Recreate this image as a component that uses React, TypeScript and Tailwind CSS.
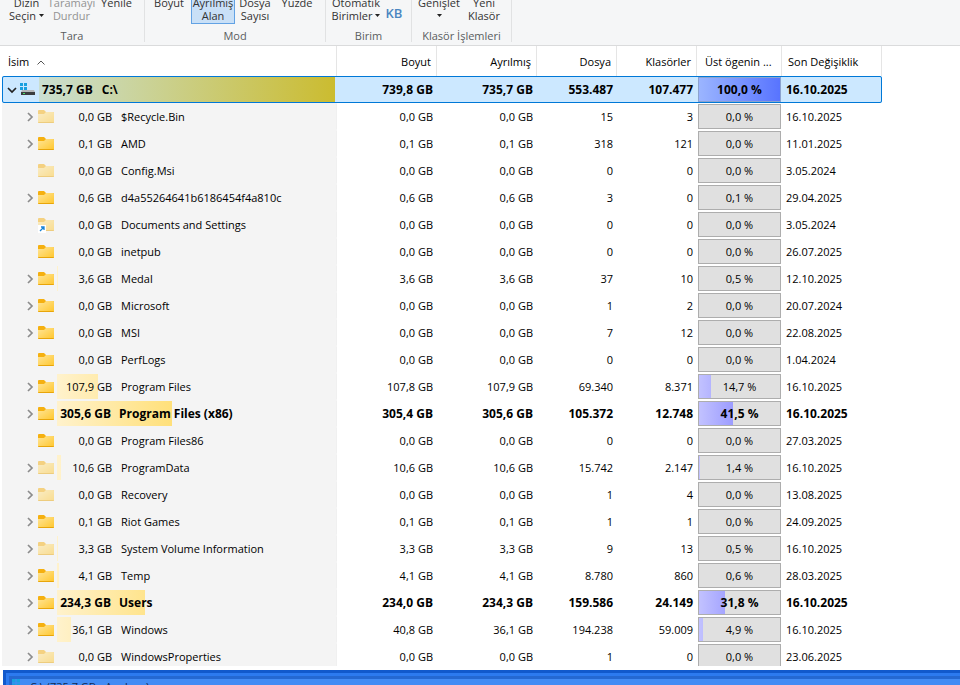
import { useState } from "react";
import type { ReactNode } from "react";
import clsx from "clsx";

type Entry = {
  name: string;
  size: string;
  total: string;
  files: string;
  folders: string;
  percent: string;
  date: string;
  leaf?: boolean;
  hidden?: boolean;
  link?: boolean;
  bold?: boolean;
};

const entries: Entry[] = [
  { name: "$Recycle.Bin", size: "0,0", total: "0,0", files: "15", folders: "3", percent: "0,0", date: "16.10.2025", hidden: true },
  { name: "AMD", size: "0,1", total: "0,1", files: "318", folders: "121", percent: "0,0", date: "11.01.2025" },
  { name: "Config.Msi", size: "0,0", total: "0,0", files: "0", folders: "0", percent: "0,0", date: "3.05.2024", leaf: true, hidden: true },
  { name: "d4a55264641b6186454f4a810c", size: "0,6", total: "0,6", files: "3", folders: "0", percent: "0,1", date: "29.04.2025" },
  { name: "Documents and Settings", size: "0,0", total: "0,0", files: "0", folders: "0", percent: "0,0", date: "3.05.2024", leaf: true, hidden: true, link: true },
  { name: "inetpub", size: "0,0", total: "0,0", files: "0", folders: "0", percent: "0,0", date: "26.07.2025", leaf: true },
  { name: "Medal", size: "3,6", total: "3,6", files: "37", folders: "10", percent: "0,5", date: "12.10.2025" },
  { name: "Microsoft", size: "0,0", total: "0,0", files: "1", folders: "2", percent: "0,0", date: "20.07.2024" },
  { name: "MSI", size: "0,0", total: "0,0", files: "7", folders: "12", percent: "0,0", date: "22.08.2025" },
  { name: "PerfLogs", size: "0,0", total: "0,0", files: "0", folders: "0", percent: "0,0", date: "1.04.2024", leaf: true },
  { name: "Program Files", size: "107,9", total: "107,8", files: "69.340", folders: "8.371", percent: "14,7", date: "16.10.2025" },
  { name: "Program Files (x86)", size: "305,6", total: "305,4", files: "105.372", folders: "12.748", percent: "41,5", date: "16.10.2025", bold: true },
  { name: "Program Files86", size: "0,0", total: "0,0", files: "0", folders: "0", percent: "0,0", date: "27.03.2025", leaf: true },
  { name: "ProgramData", size: "10,6", total: "10,6", files: "15.742", folders: "2.147", percent: "1,4", date: "16.10.2025", hidden: true },
  { name: "Recovery", size: "0,0", total: "0,0", files: "1", folders: "4", percent: "0,0", date: "13.08.2025", hidden: true },
  { name: "Riot Games", size: "0,1", total: "0,1", files: "1", folders: "1", percent: "0,0", date: "24.09.2025" },
  { name: "System Volume Information", size: "3,3", total: "3,3", files: "9", folders: "13", percent: "0,5", date: "16.10.2025", hidden: true },
  { name: "Temp", size: "4,1", total: "4,1", files: "8.780", folders: "860", percent: "0,6", date: "28.03.2025" },
  { name: "Users", size: "234,3", total: "234,0", files: "159.586", folders: "24.149", percent: "31,8", date: "16.10.2025", bold: true },
  { name: "Windows", size: "36,1", total: "40,8", files: "194.238", folders: "59.009", percent: "4,9", date: "16.10.2025" },
  { name: "WindowsProperties", size: "0,0", total: "0,0", files: "1", folders: "0", percent: "0,0", date: "23.06.2025", hidden: true },
];

const toWidth = (percent: string) => `${percent.replace(",", ".")}%`;

function FolderIcon({ faded, link }: { faded?: boolean; link?: boolean }) {
  return (
    <span className="relative block h-[13px] w-4 shrink-0">
      <svg viewBox="0 0 16 13" className={clsx("h-[13px] w-4", faded && "opacity-50")}>
        <defs>
          <linearGradient id="folder" x1="0" y1="0" x2="1" y2="1">
            <stop offset="0" stopColor="#ffe597" />
            <stop offset="1" stopColor="#ffc62c" />
          </linearGradient>
        </defs>
        <path d="M0 1Q0 0 1 0H6L8 2H15Q16 2 16 3V6H0Z" fill="#f5b010" />
        <path d="M0 4H6L8 2H15Q16 2 16 3V12Q16 13 15 13H1Q0 13 0 12Z" fill="url(#folder)" />
        <path d="M0 12H16Q16 13 15 13H1Q0 13 0 12Z" fill="#e8a50a" />
      </svg>
      {link && (
        <svg viewBox="0 0 8 8" className="absolute top-[7px] left-0 h-2 w-2">
          <path d="M0 0H8V8H0Z" fill="#fff" />
          <path d="M2 6L5.500 2.500M3 2H6V5" stroke="#1683d8" strokeWidth="1.300" fill="none" />
        </svg>
      )}
    </span>
  );
}

function WindowsMark({ className }: { className?: string }) {
  return (
    <svg viewBox="0 0 7 7" className={className} fill="#18a0e0">
      <path d="M0 0H3V3H0ZM4 0H7V3H4ZM0 4H3V7H0ZM4 4H7V7H4Z" />
    </svg>
  );
}

function DriveIcon() {
  return (
    <svg viewBox="0 0 16 13" className="h-[13px] w-4 shrink-0">
      <path d="M0 0H3V3H0ZM4 0H7V3H4ZM0 4H3V7H0ZM4 4H7V7H4Z" fill="#18a0e0" />
      <path d="M2 7H14L15 9H1Z" fill="#b4b7ba" />
      <path d="M1 9H15V12H1Z" fill="#3b3d40" />
      <path d="M3 10H5V11H3Z" fill="#4be36a" />
    </svg>
  );
}

function Chevron({ open }: { open?: boolean }) {
  return (
    <svg viewBox="0 0 10 10" className="h-2.5 w-2.5" fill="none" strokeWidth="1.700">
      {open ? (
        <path d="M1 3L5 7L9 3" stroke="#222" />
      ) : (
        <path d="M3 1L7 5L3 9" stroke="#8c8c8c" />
      )}
    </svg>
  );
}

function RibbonGroup({ label, className, children }: { label: string; className?: string; children: ReactNode }) {
  return (
    <div className="flex h-[42px] flex-col border-r border-[#e1e2e3]">
      <div className={clsx("flex h-6 shrink-0 items-end overflow-hidden", className)}>{children}</div>
      <p className="pt-1 text-center leading-4 text-[#5a5d60]">{label}</p>
    </div>
  );
}

function RibbonButton({
  lines,
  className,
  caret,
  active,
  disabled,
}: {
  lines: string[];
  className: string;
  caret?: boolean;
  active?: boolean;
  disabled?: boolean;
}) {
  return (
    <button
      type="button"
      disabled={disabled}
      className={clsx(
        "flex h-8 shrink-0 flex-col items-center border pt-[3px] leading-[13px] whitespace-nowrap",
        active ? "border-[#62a2e4] bg-[#c9e0f7]" : "border-transparent",
        disabled ? "text-[#939393]" : "text-[#333]",
        className,
      )}
    >
      {lines.map((line, i) => (
        <span key={i} className="flex h-[13px] items-center gap-[3px]">
          {line}
          {caret && i === lines.length - 1 && (
            <svg viewBox="0 0 5 3" className="h-[3px] w-[5px]">
              <path d="M0 0H5L2.500 3Z" fill="#222" />
            </svg>
          )}
        </span>
      ))}
    </button>
  );
}

function Ribbon() {
  return (
    <header className="flex h-[46px] shrink-0 overflow-hidden border-b border-[#dadbdc] bg-[#f5f6f7]">
      <RibbonGroup label="Tara" className="pr-[5px] pl-1">
        <RibbonButton lines={["Dizin", "Seçin"]} className="w-[45px]" caret />
        <RibbonButton lines={["Taramayı", "Durdur"]} className="w-[45px]" disabled />
        <RibbonButton lines={["Yenile"]} className="w-[45px]" />
      </RibbonGroup>
      <RibbonGroup label="Mod" className="pr-1.5 pl-0.5">
        <RibbonButton lines={["Boyut"]} className="w-11" />
        <RibbonButton lines={["Ayrılmış", "Alan"]} className="w-11" active />
        <RibbonButton lines={["Dosya", "Sayısı"]} className="w-10" />
        <RibbonButton lines={["Yüzde"]} className="w-11" />
      </RibbonGroup>
      <RibbonGroup label="Birim" className="pr-[5px] pl-1">
        <RibbonButton lines={["Otomatik", "Birimler"]} className="w-[52px]" caret />
        <button type="button" className="w-6 pb-[3px] text-[13px] leading-4 font-semibold text-[#4a86c0]">
          KB
        </button>
      </RibbonGroup>
      <RibbonGroup label="Klasör İşlemleri" className="pr-[5px] pl-1">
        <RibbonButton lines={["Genişlet", ""]} className="w-[46px]" caret />
        <RibbonButton lines={["Yeni", "Klasör"]} className="w-11" />
      </RibbonGroup>
    </header>
  );
}

function PercentCell({ percent, root }: { percent: string; root?: boolean }) {
  return (
    <td className="p-0 px-px">
      <div
        className={clsx(
          "relative h-[25px] border text-center leading-[23px]",
          root ? "border-[#8ba3cf] bg-[#cce8ff]" : "border-[#adadad] bg-[#e0e0e0]",
        )}
      >
        <div
          className={clsx(
            "absolute inset-y-0 left-0",
            root
              ? "bg-[linear-gradient(to_right,#9bb5ff,#5874ff)]"
              : "bg-[linear-gradient(to_right,#c2c2ff,#9c9cff_34px)]",
          )}
          style={{ width: toWidth(percent) }}
        />
        <span className="relative">{percent} %</span>
      </div>
    </td>
  );
}

function EntryRow({ entry }: { entry: Entry }) {
  return (
    <tr className={clsx("h-[27px]", entry.bold && "text-[12px] font-bold")}>
      <td className="bg-[#f4f4f4] p-0">
        <div className="flex h-[25px] items-center border-r border-[#f0f0f0] pl-[23px]">
          <span className="flex w-[13px] shrink-0">
            {!entry.leaf && (
              <button type="button" aria-label={entry.name}>
                <Chevron />
              </button>
            )}
          </span>
          <FolderIcon faded={entry.hidden} link={entry.link} />
          <div
            className={clsx(
              "relative mr-px ml-[3px] flex h-[25px] flex-1 items-center",
              entry.bold ? "gap-2" : "gap-[9px]",
            )}
          >
            <div
              className="absolute inset-y-0 left-0 bg-[linear-gradient(to_right,#fff2cc,#ffe07a_115px)]"
              style={{ width: toWidth(entry.percent) }}
            />
            <span className={clsx("relative text-right whitespace-nowrap", entry.bold ? "w-[54px]" : "w-[55px]")}>
              {entry.size} GB
            </span>
            <span className="relative whitespace-nowrap">{entry.name}</span>
          </div>
        </div>
      </td>
      <td className="p-0 pr-1 text-right">{entry.total} GB</td>
      <td className="p-0 pr-1 text-right">{entry.size} GB</td>
      <td className="p-0 pr-1 text-right">{entry.files}</td>
      <td className="p-0 pr-1 text-right">{entry.folders}</td>
      <PercentCell percent={entry.percent} />
      <td className="p-0 pl-1">{entry.date}</td>
    </tr>
  );
}

export default function App() {
  const [open, setOpen] = useState(true);

  return (
    <div className="flex h-screen flex-col overflow-hidden bg-white font-['Open_Sans','Noto_Sans',sans-serif] text-[11px] text-black">
      <Ribbon />

      <main className="min-h-0 flex-1 overflow-hidden pl-0.5">
        <table className="w-[880px] table-fixed border-separate border-spacing-0 leading-4">
          <colgroup>
            <col className="w-[335px]" />
            <col className="w-[100px]" />
            <col className="w-[100px]" />
            <col className="w-20" />
            <col className="w-20" />
            <col className="w-[85px]" />
            <col className="w-[100px]" />
          </colgroup>
          <thead>
            <tr className="h-[30px] whitespace-nowrap *:border-r *:border-[#e5e5e5] *:p-0 *:pt-0.5 *:font-normal">
              <th className="text-left">
                <button type="button" className="flex items-center gap-2 pl-1.5">
                  İsim
                  <svg viewBox="0 0 8 5" className="h-[5px] w-2" fill="none">
                    <path d="M.5 4.500L4 1L7.500 4.500" stroke="#555" />
                  </svg>
                </button>
              </th>
              <th className="text-right">
                <span className="pr-[5px]">Boyut</span>
              </th>
              <th className="text-right">
                <span className="pr-[5px]">Ayrılmış</span>
              </th>
              <th className="text-right">
                <span className="pr-[5px]">Dosya</span>
              </th>
              <th className="text-right">
                <span className="pr-[5px]">Klasörler</span>
              </th>
              <th className="text-left">
                <span className="pl-2">Üst ögenin ...</span>
              </th>
              <th className="text-left">
                <span className="pl-1.5">Son Değişiklik</span>
              </th>
            </tr>
          </thead>
          <tbody>
            <tr className="h-[27px] rounded-xs bg-[#cce8ff] text-[12px] font-bold outline-1 -outline-offset-1 outline-[#0078d7]">
              <td className="p-0">
                <div className="flex h-[25px] items-center pl-[5px]">
                  <button type="button" aria-label="C:\" className="mr-[3px]" onClick={() => setOpen(!open)}>
                    <Chevron open={open} />
                  </button>
                  <DriveIcon />
                  <div className="mr-0.5 ml-[3px] flex h-[25px] flex-1 items-center gap-[9px] bg-[linear-gradient(to_right,#cadfd2,#cbbc30)] pl-[3px]">
                    <span>735,7 GB</span>
                    <span>C:\</span>
                  </div>
                </div>
              </td>
              <td className="p-0 pr-1 text-right">739,8 GB</td>
              <td className="p-0 pr-1 text-right">735,7 GB</td>
              <td className="p-0 pr-1 text-right">553.487</td>
              <td className="p-0 pr-1 text-right">107.477</td>
              <PercentCell percent="100,0" root />
              <td className="p-0 pl-1">16.10.2025</td>
            </tr>
            {open && entries.map((entry) => <EntryRow key={entry.name} entry={entry} />)}
          </tbody>
        </table>
      </main>

      {/* Treemap pane, only its top edge is in view */}
      <section className="mt-1 ml-[3px] h-[15px] shrink-0 overflow-hidden border-t-3 border-l-3 border-[#1159cc]">
        <div className="border-t-3 border-l-3 border-[#2c7aef]">
          <div className="border-t-3 border-l-3 border-[#2468d2] bg-[#428bf4]">
            <div className="flex h-5 items-start gap-2.5">
              <WindowsMark className="h-2 w-2" />
              <span className="leading-4 text-[#12284f]">C:\ (735,7 GB - Ayrılmış)</span>
            </div>
          </div>
        </div>
      </section>
    </div>
  );
}
